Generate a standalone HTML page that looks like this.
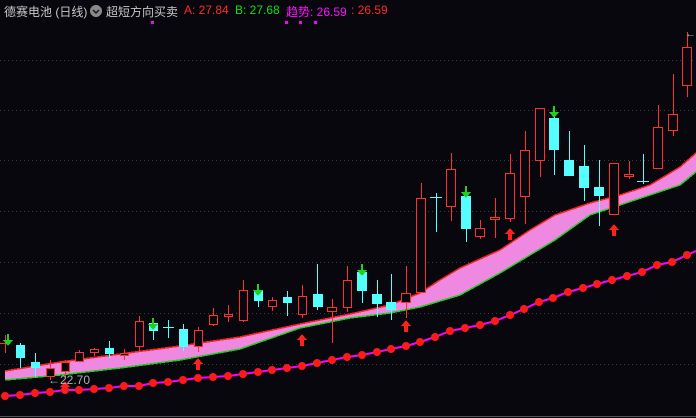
<!DOCTYPE html>
<html><head><meta charset="utf-8"><style>
html,body{margin:0;padding:0;background:#07070d;width:696px;height:418px;overflow:hidden}
#hd{position:absolute;top:3px;left:4px;font:12px "Liberation Sans","Noto Sans CJK SC",sans-serif;white-space:nowrap;color:#c8c8c8}
#hd span{position:absolute;top:0}
svg{position:absolute;left:0;top:0}
.r{fill:#07070d;stroke:#ff3030;stroke-width:1}
.c{fill:#55ffff}
.wr{stroke:#ff3030;stroke-width:1}
.wc{stroke:#55ffff;stroke-width:1}
</style></head><body>
<svg width="696" height="418" shape-rendering="crispEdges">
<g stroke="#3a3a44" stroke-dasharray="1,3" stroke-width="1">
<line x1="0" x2="696" y1="60.5" y2="60.5"/><line x1="0" x2="696" y1="110.5" y2="110.5"/>
<line x1="0" x2="696" y1="160.5" y2="160.5"/><line x1="0" x2="696" y1="211.5" y2="211.5"/>
<line x1="0" x2="696" y1="262.5" y2="262.5"/><line x1="0" x2="696" y1="313.5" y2="313.5"/>
<line x1="0" x2="696" y1="364.5" y2="364.5"/></g>
<line x1="0" x2="696" y1="416.5" y2="416.5" stroke="#555" stroke-width="1"/>
<g fill="#ff00ff"><rect x="151" y="21" width="3" height="3"/><rect x="285" y="21" width="3" height="3"/><rect x="299" y="21" width="3" height="3"/><rect x="314" y="21" width="3" height="3"/></g>
<!-- band -->
<polygon fill="#ee88e0" points="5,371 60,362 120,354 180,346 240,337 300,324 350,314 390,305 420,293 440,280 460,268 500,250 530,230 555,215 590,203 620,195 650,185 680,167 696,153 696,172 680,185 650,195 620,205 590,215 555,240 530,255 500,273 460,295 420,307 390,313 350,318 300,328 240,349 180,360 120,368 60,375 5,380"/>
<polyline fill="none" stroke="#ff2020" stroke-width="1.5" points="5,371 60,362 120,354 180,346 240,337 300,324 350,314 390,305 420,293 440,280 460,268 500,250 530,230 555,215 590,203 620,195 650,185 680,167 696,153"/>
<polyline fill="none" stroke="#20d020" stroke-width="1.5" points="5,380 60,375 120,368 180,360 240,349 300,328 350,318 390,313 420,307 460,295 500,273 530,255 555,240 590,215 620,205 650,195 680,185 696,172"/>
<!-- candles -->
<g>
<line class="wr" x1="5.5" x2="5.5" y1="335" y2="353"/><line class="wr" x1="0" x2="10" y1="343.5" y2="343.5"/>
<line class="wc" x1="20.5" x2="20.5" y1="343" y2="368"/><rect class="c" x="16" y="345" width="9" height="13"/>
<line class="wc" x1="35.5" x2="35.5" y1="353" y2="377"/><rect class="c" x="31" y="362" width="9" height="6"/>
<line class="wr" x1="50.5" x2="50.5" y1="360" y2="380"/><rect class="r" x="46.5" y="368.5" width="8" height="8"/>
<line class="wr" x1="65.5" x2="65.5" y1="360" y2="378"/><rect class="r" x="61.5" y="362.5" width="8" height="9"/>
<line class="wr" x1="79.5" x2="79.5" y1="350" y2="362"/><rect class="r" x="75.5" y="352.5" width="8" height="9"/>
<line class="wr" x1="94.5" x2="94.5" y1="348" y2="356"/><rect class="r" x="90.5" y="349.5" width="8" height="3"/>
<line class="wc" x1="109.5" x2="109.5" y1="341" y2="358"/><rect class="c" x="105" y="348" width="9" height="6"/>
<line class="wr" x1="124.5" x2="124.5" y1="349" y2="360"/><rect class="r" x="120.5" y="353.5" width="8" height="2"/>
<line class="wr" x1="139.5" x2="139.5" y1="316" y2="352"/><rect class="r" x="135.5" y="321.5" width="8" height="25"/>
<line class="wc" x1="153.5" x2="153.5" y1="320" y2="340"/><rect class="c" x="149" y="323" width="9" height="8"/>
<line class="wc" x1="168.5" x2="168.5" y1="320" y2="338"/><line class="wc" x1="163" x2="174" y1="327.5" y2="327.5"/>
<line class="wc" x1="183.5" x2="183.5" y1="324" y2="351"/><rect class="c" x="179" y="329" width="9" height="18"/>
<line class="wr" x1="198.5" x2="198.5" y1="327" y2="352"/><rect class="r" x="194.5" y="330.5" width="8" height="16"/>
<line class="wr" x1="213.5" x2="213.5" y1="308" y2="326"/><rect class="r" x="209.5" y="315.5" width="8" height="9"/>
<line class="wr" x1="228.5" x2="228.5" y1="305" y2="322"/><rect class="r" x="224.5" y="314.5" width="8" height="2"/>
<line class="wr" x1="243.5" x2="243.5" y1="280" y2="322"/><rect class="r" x="239.5" y="290.5" width="8" height="30"/>
<line class="wc" x1="258.5" x2="258.5" y1="286" y2="307"/><rect class="c" x="254" y="290" width="9" height="11"/>
<line class="wr" x1="272.5" x2="272.5" y1="297" y2="311"/><rect class="r" x="268.5" y="300.5" width="8" height="6"/>
<line class="wc" x1="287.5" x2="287.5" y1="291" y2="316"/><rect class="c" x="283" y="297" width="9" height="6"/>
<line class="wr" x1="302.5" x2="302.5" y1="285" y2="318"/><rect class="r" x="298.5" y="296.5" width="8" height="18"/>
<line class="wc" x1="317.5" x2="317.5" y1="264" y2="310"/><rect class="c" x="313" y="294" width="10" height="13"/>
<line class="wr" x1="332.5" x2="332.5" y1="299" y2="343"/><rect class="r" x="327.5" y="307.5" width="9" height="4"/>
<line class="wr" x1="347.5" x2="347.5" y1="266" y2="312"/><rect class="r" x="343.5" y="280.5" width="8" height="27"/>
<line class="wc" x1="362.5" x2="362.5" y1="265" y2="303"/><rect class="c" x="357" y="272" width="10" height="19"/>
<line class="wc" x1="377.5" x2="377.5" y1="280" y2="317"/><rect class="c" x="372" y="294" width="10" height="10"/>
<line class="wc" x1="391.5" x2="391.5" y1="274" y2="320"/><rect class="c" x="386" y="302" width="10" height="8"/>
<line class="wr" x1="406.5" x2="406.5" y1="266" y2="318"/><rect class="r" x="401.5" y="293.5" width="9" height="9"/>
<line class="wr" x1="421.5" x2="421.5" y1="183" y2="293"/><rect class="r" x="416.5" y="198.5" width="9" height="94"/>
<line class="wc" x1="436.5" x2="436.5" y1="193" y2="232"/><line class="wc" x1="430" x2="442" y1="197.5" y2="197.5"/>
<line class="wr" x1="451.5" x2="451.5" y1="153" y2="221"/><rect class="r" x="446.5" y="169.5" width="9" height="37"/>
<line class="wc" x1="466.5" x2="466.5" y1="190" y2="242"/><rect class="c" x="461" y="196" width="10" height="33"/>
<line class="wr" x1="480.5" x2="480.5" y1="220" y2="239"/><rect class="r" x="475.5" y="228.5" width="9" height="8"/>
<line class="wr" x1="495.5" x2="495.5" y1="198" y2="238"/><rect class="r" x="490.5" y="217.5" width="9" height="2"/>
<line class="wr" x1="510.5" x2="510.5" y1="154" y2="222"/><rect class="r" x="505.5" y="173.5" width="9" height="45"/>
<line class="wr" x1="525.5" x2="525.5" y1="131" y2="224"/><rect class="r" x="520.5" y="150.5" width="9" height="46"/>
<line class="wr" x1="540.5" x2="540.5" y1="108" y2="177"/><rect class="r" x="535.5" y="108.5" width="9" height="52"/>
<line class="wc" x1="554.5" x2="554.5" y1="108" y2="175"/><rect class="c" x="549" y="118" width="10" height="32"/>
<line class="wc" x1="569.5" x2="569.5" y1="131" y2="175"/><rect class="c" x="564" y="160" width="10" height="16"/>
<line class="wc" x1="584.5" x2="584.5" y1="145" y2="201"/><rect class="c" x="579" y="166" width="10" height="22"/>
<line class="wc" x1="599.5" x2="599.5" y1="160" y2="226"/><rect class="c" x="594" y="187" width="10" height="9"/>
<line class="wr" x1="614.5" x2="614.5" y1="163" y2="215"/><rect class="r" x="609.5" y="163.5" width="9" height="51"/>
<line class="wr" x1="629.5" x2="629.5" y1="161" y2="179"/><rect class="r" x="624.5" y="174.5" width="9" height="2"/>
<line class="wc" x1="643.5" x2="643.5" y1="154" y2="184"/><line class="wc" x1="637" x2="649" y1="181.5" y2="181.5"/>
<line class="wr" x1="658.5" x2="658.5" y1="105" y2="168"/><rect class="r" x="653.5" y="127.5" width="9" height="41"/>
<line class="wr" x1="673.5" x2="673.5" y1="74" y2="136"/><rect class="r" x="668.5" y="114.5" width="9" height="16"/>
<line class="wr" x1="687.5" x2="687.5" y1="32" y2="97"/><rect class="r" x="682.5" y="47.5" width="9" height="38"/>
</g>
<!-- dots line -->
<g shape-rendering="auto">
<polyline fill="none" stroke="#ff00ff" stroke-width="2" points="5,396 20,395 35,393 50,392 65,390 79,390 94,389 109,388 124,386 139,386 153,383 168,382 183,380 198,378 213,377 228,376 243,374 258,372 272,370 287,368 302,366 317,363 332,360 347,357 362,355 377,352 391,349 406,346 420,342 435,337 450,331 465,328 480,325 495,321 510,315 524,309 539,302 553,298 568,292 583,288 597,284 612,280 627,276 642,272 657,265 672,262 687,255 696,251"/>
<g fill="#ff1a1a">
<circle cx="5" cy="396" r="4"/><circle cx="20" cy="395" r="4"/><circle cx="35" cy="393" r="4"/><circle cx="50" cy="392" r="4"/><circle cx="65" cy="390" r="4"/><circle cx="79" cy="390" r="4"/><circle cx="94" cy="389" r="4"/><circle cx="109" cy="388" r="4"/><circle cx="124" cy="386" r="4"/><circle cx="139" cy="386" r="4"/><circle cx="153" cy="383" r="4"/><circle cx="168" cy="382" r="4"/><circle cx="183" cy="380" r="4"/><circle cx="198" cy="378" r="4"/><circle cx="213" cy="377" r="4"/><circle cx="228" cy="376" r="4"/><circle cx="243" cy="374" r="4"/><circle cx="258" cy="372" r="4"/><circle cx="272" cy="370" r="4"/><circle cx="287" cy="368" r="4"/><circle cx="302" cy="366" r="4"/><circle cx="317" cy="363" r="4"/><circle cx="332" cy="360" r="4"/><circle cx="347" cy="357" r="4"/><circle cx="362" cy="355" r="4"/><circle cx="377" cy="352" r="4"/><circle cx="391" cy="349" r="4"/><circle cx="406" cy="346" r="4"/><circle cx="420" cy="342" r="4"/><circle cx="435" cy="337" r="4"/><circle cx="450" cy="331" r="4"/><circle cx="465" cy="328" r="4"/><circle cx="480" cy="325" r="4"/><circle cx="495" cy="321" r="4"/><circle cx="510" cy="315" r="4"/><circle cx="524" cy="309" r="4"/><circle cx="539" cy="302" r="4"/><circle cx="553" cy="298" r="4"/><circle cx="568" cy="292" r="4"/><circle cx="583" cy="288" r="4"/><circle cx="597" cy="284" r="4"/><circle cx="612" cy="280" r="4"/><circle cx="627" cy="276" r="4"/><circle cx="642" cy="272" r="4"/><circle cx="657" cy="265" r="4"/><circle cx="672" cy="262" r="4"/><circle cx="687" cy="255" r="4"/>
</g></g>
<!-- arrows -->
<g fill="#ff2020">
<path d="M65,381 l5,6 h-3 v6 h-4 v-6 h-3z"/>
<path d="M198,358 l5,6 h-3 v6 h-4 v-6 h-3z"/>
<path d="M302,334 l5,6 h-3 v6 h-4 v-6 h-3z"/>
<path d="M406,320 l5,6 h-3 v6 h-4 v-6 h-3z"/>
<path d="M510,228 l5,6 h-3 v6 h-4 v-6 h-3z"/>
<path d="M614,224 l5,6 h-3 v6 h-4 v-6 h-3z"/>
</g>
<g fill="#20d020">
<path d="M7,334 h2 v6 h4 l-5,6 l-5,-6 h4z"/>
<path d="M152,318 h2 v6 h4 l-5,6 l-5,-6 h4z"/>
<path d="M257,284 h2 v6 h4 l-5,6 l-5,-6 h4z"/>
<path d="M361,264 h2 v6 h4 l-5,6 l-5,-6 h4z"/>
<path d="M465,186 h2 v6 h4 l-5,6 l-5,-6 h4z"/>
<path d="M553,106 h2 v6 h4 l-5,6 l-5,-6 h4z"/>
</g>
<text x="48" y="384" fill="#b0b0b0" font-family="Liberation Sans" font-size="12">←22.70</text>
<text x="685" y="37" fill="#b0b0b0" font-family="Liberation Sans" font-size="11">←</text>
<circle cx="96" cy="11" r="6" fill="#8a8a8a"/>
<path d="M93,10 l3,3 l3,-3" fill="none" stroke="#222" stroke-width="1.6" shape-rendering="auto"/>
</svg>
<div id="hd">
<span style="left:0">德赛电池 (日线)</span>
<span style="left:102px">超短方向买卖</span>
<span style="left:180px;color:#ff2a2a">A: 27.84</span>
<span style="left:231px;color:#10e010">B: 27.68</span>
<span style="left:282px;color:#ff10ff">趋势: 26.59</span>
<span style="left:347px;color:#ff2a2a">: 26.59</span>
</div>
</body></html>
